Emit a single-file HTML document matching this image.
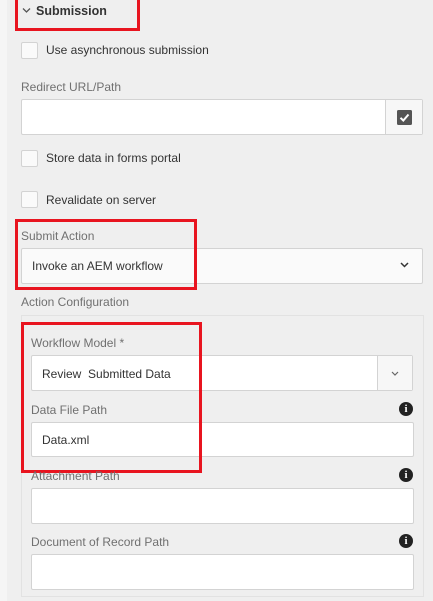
<!DOCTYPE html>
<html><head><meta charset="utf-8"><style>
*{box-sizing:border-box;margin:0;padding:0}
body{width:433px;height:601px;background:#efefef;position:relative;overflow:hidden;font-family:"Liberation Sans",sans-serif;font-size:12px;color:#333}
.a{position:absolute}
.strip{left:0;top:0;width:7px;height:601px;background:#f5f5f5}
.red{position:absolute;border:3px solid #e8141f}
.cb{position:absolute;width:17px;height:17px;background:#fafafa;border:1px solid #d3d3d3;border-radius:2px}
.t{position:absolute;font-size:12px;color:#333;line-height:14px;white-space:nowrap}
.l{position:absolute;font-size:12px;color:#707070;line-height:14px;white-space:nowrap}
.in{position:absolute;background:#fff;border:1px solid #d3d3d3;border-radius:2px}
.info{position:absolute;width:14px;height:14px;border-radius:50%;background:#222;color:#fff;font:bold 11px "Liberation Serif",serif;text-align:center;line-height:14px}
</style></head><body>
<div class="a strip"></div>
<svg class="a" style="left:22px;top:7px" width="9" height="7"><path d="M1 1.5L4.5 5L8 1.5" stroke="#555" stroke-width="1.3" fill="none"/></svg>
<div class="t" style="left:36px;top:4px;font-weight:bold;font-size:12.5px">Submission</div>
<div class="red" style="left:15px;top:0;width:125px;height:31px;border-top:none"></div>

<div class="cb" style="left:21px;top:42px"></div>
<div class="t" style="left:46px;top:43px">Use asynchronous submission</div>

<div class="l" style="left:21px;top:80px">Redirect URL/Path</div>
<div class="in" style="left:21px;top:99px;width:402px;height:36px"></div>
<div class="a" style="left:385px;top:100px;width:1px;height:34px;background:#d3d3d3"></div>
<div class="a" style="left:386px;top:100px;width:36px;height:34px;background:#f7f7f7"></div>
<svg class="a" style="left:397px;top:110px" width="15" height="15"><rect x="0" y="0" width="15" height="15" rx="1.5" fill="#555"/><path d="M3.5 7.8L6.3 10.5L11.5 4.5" stroke="#fff" stroke-width="2" fill="none"/></svg>

<div class="cb" style="left:21px;top:150px"></div>
<div class="t" style="left:46px;top:151px">Store data in forms portal</div>
<div class="cb" style="left:21px;top:191px"></div>
<div class="t" style="left:46px;top:193px">Revalidate on server</div>

<div class="l" style="left:21px;top:229px">Submit Action</div>
<div class="in" style="left:21px;top:248px;width:402px;height:36px;background:#fafafa"></div>
<div class="t" style="left:32px;top:259px">Invoke an AEM workflow</div>
<svg class="a" style="left:400px;top:262px" width="9" height="6"><path d="M1 1L4.5 4.5L8 1" stroke="#333" stroke-width="1.5" fill="none"/></svg>
<div class="red" style="left:15px;top:219px;width:182px;height:71px"></div>

<div class="l" style="left:21px;top:295px">Action Configuration</div>
<div class="a" style="left:21px;top:315px;width:403px;height:282px;border:1px solid #e2e2e2;background:#efefef"></div>

<div class="l" style="left:31px;top:336px">Workflow Model *</div>
<div class="in" style="left:31px;top:355px;width:382px;height:36px"></div>
<div class="a" style="left:377px;top:356px;width:1px;height:34px;background:#d3d3d3"></div>
<div class="a" style="left:378px;top:356px;width:34px;height:34px;background:#f7f7f7"></div>
<svg class="a" style="left:391px;top:371px" width="8" height="5"><path d="M1 1L4 4L7 1" stroke="#666" stroke-width="1.2" fill="none"/></svg>
<div class="t" style="left:42px;top:367px">Review&nbsp; Submitted Data</div>

<div class="l" style="left:31px;top:403px">Data File Path</div>
<div class="info" style="left:399px;top:402px">i</div>
<div class="in" style="left:31px;top:422px;width:383px;height:35px"></div>
<div class="t" style="left:42px;top:433px">Data.xml</div>
<div class="red" style="left:21px;top:322px;width:181px;height:151px"></div>

<div class="l" style="left:31px;top:469px">Attachment Path</div>
<div class="info" style="left:399px;top:468px">i</div>
<div class="in" style="left:31px;top:488px;width:383px;height:36px"></div>

<div class="l" style="left:31px;top:535px">Document of Record Path</div>
<div class="info" style="left:399px;top:534px">i</div>
<div class="in" style="left:31px;top:554px;width:383px;height:36px"></div>
</body></html>
